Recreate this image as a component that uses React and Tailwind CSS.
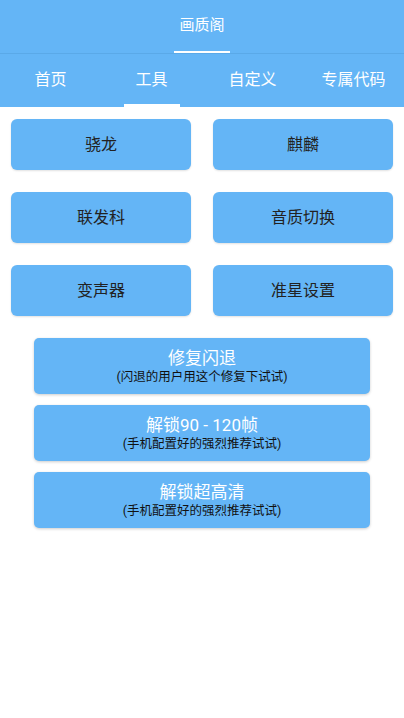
import React from "react";

const tabs = ["首页", "工具", "自定义", "专属代码"];
const grid = ["骁龙", "麒麟", "联发科", "音质切换", "变声器", "准星设置"];
const wide = [
  { title: "修复闪退", sub: "(闪退的用户用这个修复下试试)" },
  { title: "解锁90 - 120帧", sub: "(手机配置好的强烈推荐试试)" },
  { title: "解锁超高清", sub: "(手机配置好的强烈推荐试试)" },
];

const App = () => {
  return (
    <div
      className="w-[404px] h-[718px] bg-white overflow-hidden"
      style={{ fontFamily: '"Roboto", "Noto Sans CJK SC", sans-serif' }}
    >
      {/* title bar */}
      <div className="h-[54px] bg-[#64b5f6] border-b border-[#5aa9e8] flex flex-col items-center">
        <div className="flex-1 flex items-center text-white text-[15px]">画质阁</div>
        <div className="w-[56px] h-[2px] bg-white"></div>
      </div>
      {/* tabs */}
      <div className="h-[53px] bg-[#64b5f6] grid grid-cols-4">
        {tabs.map((t, i) => (
          <div key={t} className="flex flex-col items-center">
            <div className="flex-1 flex items-center text-white text-[16px] pt-[1px]">{t}</div>
            <div className={i === 1 ? "w-[56px] h-[3px] bg-white" : "h-[3px]"}></div>
          </div>
        ))}
      </div>
      {/* grid buttons */}
      <div className="grid grid-cols-2 gap-x-[22px] gap-y-[22px] px-[11px] pt-[12px]">
        {grid.map((g) => (
          <div
            key={g}
            className="h-[51px] rounded-[6px] bg-[#64b5f6] shadow-[0_1px_2px_rgba(0,0,0,0.12)] flex items-center justify-center text-[16px] text-[#222]"
          >
            {g}
          </div>
        ))}
      </div>
      {/* wide buttons */}
      <div className="flex flex-col gap-[11px] px-[34px] pt-[22px]">
        {wide.map((w) => (
          <div
            key={w.title}
            className="h-[56px] rounded-[5px] bg-[#64b5f6] shadow-[0_1px_3px_rgba(0,0,0,0.2)] flex flex-col items-center justify-center"
          >
            <div className="text-white text-[17px] leading-[21px]">{w.title}</div>
            <div className="text-[#111] text-[12.5px] leading-[15px]">{w.sub}</div>
          </div>
        ))}
      </div>
    </div>
  );
};

export default App;
